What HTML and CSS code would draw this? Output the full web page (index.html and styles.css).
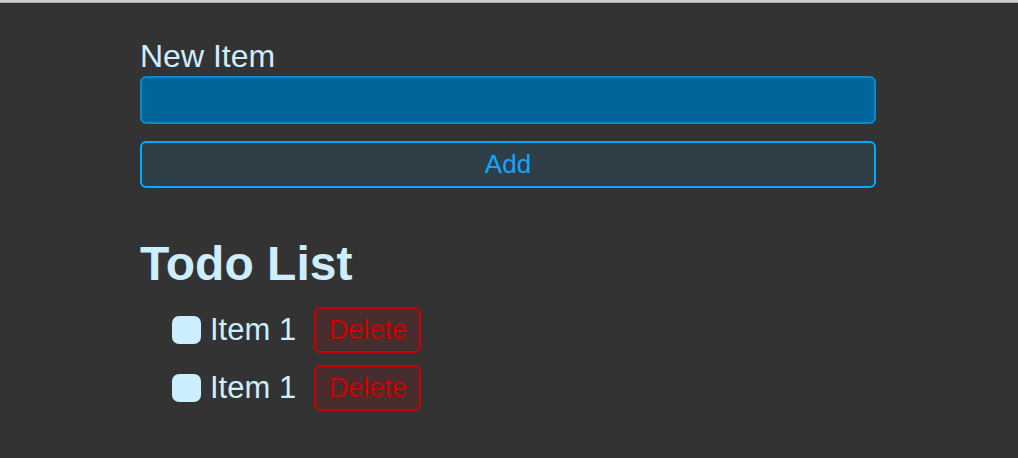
FILE: index.html
```html
<!DOCTYPE html>
<html lang="en">
<head>
<meta charset="utf-8">
<title>Todo</title>
<link rel="stylesheet" href="styles.css">
</head>
<body>
<div class="topline"></div>
<main class="app">
  <form class="new-form">
    <label class="label" for="new-item">New Item</label>
    <input id="new-item" class="input" type="text">
    <button type="button" class="add-btn">Add</button>
  </form>
  <h1 class="title">Todo List</h1>
  <ul class="list">
    <li class="item">
      <span class="check"></span>
      <span class="item-text">Item 1</span>
      <button type="button" class="del-btn">Delete</button>
    </li>
    <li class="item">
      <span class="check"></span>
      <span class="item-text">Item 1</span>
      <button type="button" class="del-btn">Delete</button>
    </li>
  </ul>
</main>
</body>
</html>
```
FILE: styles.css
```css
* { box-sizing: border-box; }
html, body {
  margin: 0;
  padding: 0;
  background: #333333;
  height: 100%;
}
body {
  font-family: "Liberation Sans", Arial, sans-serif;
  color: #cdeeff;
  overflow: hidden;
}
.topline {
  height: 3px;
  background: #cfcfcf;
  border-bottom: 1px solid #a9a9a9;
}
.app {
  width: 736px;
  margin-left: 140px;
  padding-top: 35px;
}
.new-form {
  display: flex;
  flex-direction: column;
}
.label {
  font-size: 32px;
  line-height: 36px;
  margin-bottom: 2px;
}
.input {
  height: 48px;
  background: #006699;
  border: 2px solid #0a88cc;
  border-radius: 6px;
  outline: none;
  color: #cdeeff;
  font-size: 24px;
  padding: 0 10px;
}
.add-btn {
  margin-top: 17px;
  height: 47px;
  background: #2e3f48;
  border: 2px solid #00aaff;
  border-radius: 6px;
  color: #11a6ff;
  font-family: "Liberation Sans", Arial, sans-serif;
  font-size: 26px;
  padding: 0;
}
.title {
  font-size: 48px;
  font-weight: bold;
  margin: 48px 0 0;
  line-height: 55px;
}
.list {
  list-style: none;
  margin: 16px 0 0;
  padding: 0 0 0 32px;
  display: flex;
  flex-direction: column;
  gap: 12px;
}
.item {
  display: flex;
  align-items: center;
  height: 46px;
}
.check {
  width: 29px;
  height: 28px;
  background: #cdeeff;
  border-radius: 7px;
  margin-right: 9px;
}
.item-text {
  font-size: 31px;
  margin-right: 18px;
}
.del-btn {
  width: 107px;
  height: 46px;
  background: #472d2d;
  border: 2px solid #cc0000;
  border-radius: 6px;
  color: #cc0000;
  font-family: "Liberation Sans", Arial, sans-serif;
  font-size: 27px;
  padding: 0;
}
```
